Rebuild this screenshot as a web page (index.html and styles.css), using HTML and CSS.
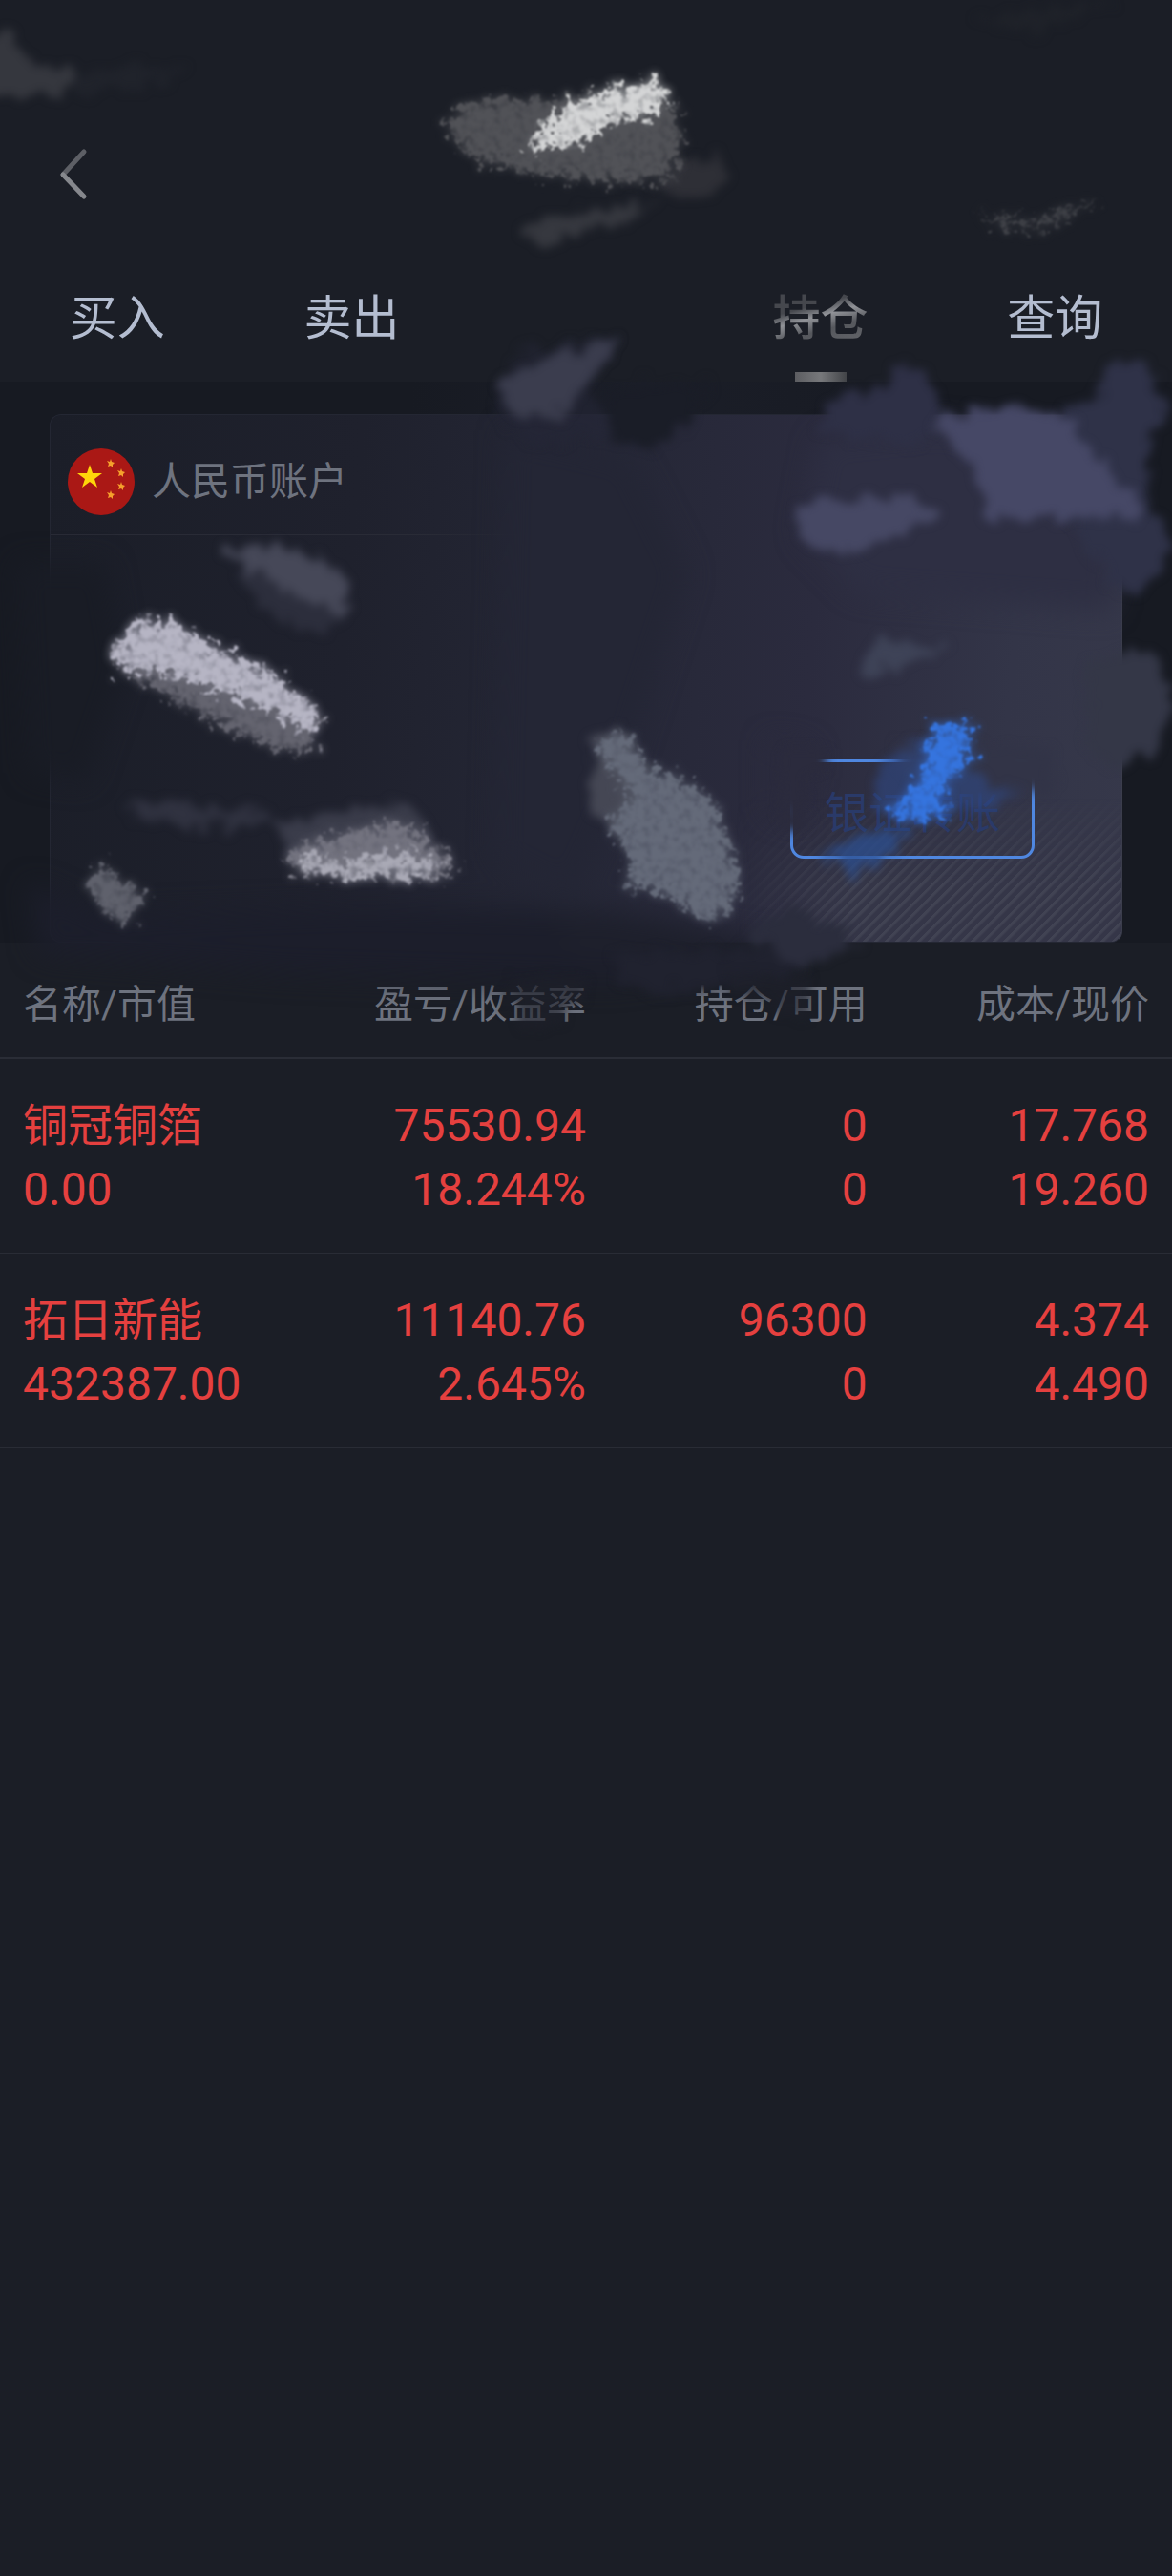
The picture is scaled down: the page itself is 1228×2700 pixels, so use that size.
FILE: index.html
```html
<!DOCTYPE html>
<html lang="zh-CN">
<head>
    <meta charset="UTF-8">
    <meta name="viewport" content="width=device-width, initial-scale=1.0">
    <title>持仓</title>
    <link rel="stylesheet" href="styles.css">
</head>
<body>
    <header class="header">
        <button type="button" class="back-btn" aria-label="返回">
            <svg width="36" height="60" viewBox="0 0 36 60" fill="none" stroke-width="5" stroke-linecap="round">
                <path d="M28 6 L6 30" stroke="#5d5f65"/>
                <path d="M6 30 L28 53" stroke="#86888d"/>
            </svg>
        </button>
        <nav class="tabs">
            <a href="#buy" class="tab">买入</a>
            <a href="#sell" class="tab">卖出</a>
            <span class="tab"></span>
            <a href="#position" class="tab active"><span class="tab-text">持仓</span></a>
            <a href="#query" class="tab">查询</a>
        </nav>
    </header>

    <main>
        <section class="account">
            <div class="card">
                <div class="card-head">
                    <svg class="flag" width="70" height="70" viewBox="0 0 70 70">
                        <circle cx="35" cy="35" r="35" fill="#aa1815"/>
                        <polygon points="23,17 26,26 36,26 28,32 31,41 23,35 15,41 18,32 10,26 20,26" fill="#ffd60a"/>
                        <g fill="#f5a02c">
                            <path d="M45 11 L46 14 L49 15 L47 17 L47 20 L45 18 L42 19 L43 16 L41 13 L44 14 Z"/>
                            <path d="M56 21 L57 24 L60 25 L58 27 L58 30 L56 28 L53 29 L54 26 L52 23 L55 24 Z"/>
                            <path d="M56 35 L57 38 L60 39 L58 41 L58 44 L56 42 L53 43 L54 40 L52 37 L55 38 Z"/>
                            <path d="M45 44 L46 47 L49 48 L47 50 L47 53 L45 51 L42 52 L43 49 L41 46 L44 47 Z"/>
                        </g>
                    </svg>
                    <span class="card-title">人民币账户</span>
                </div>
                <div class="card-body">
                    <button type="button" class="transfer-btn">银证转账</button>
                </div>
            </div>
        </section>

        <table class="positions">
            <thead>
                <tr>
                    <th>名称/市值</th>
                    <th>盈亏/收益率</th>
                    <th>持仓/可用</th>
                    <th>成本/现价</th>
                </tr>
            </thead>
            <tbody>
                <tr>
                    <td><span class="name">铜冠铜箔</span><br>0.00</td>
                    <td>75530.94<br>18.244%</td>
                    <td>0<br>0</td>
                    <td>17.768<br>19.260</td>
                </tr>
                <tr>
                    <td><span class="name">拓日新能</span><br>432387.00</td>
                    <td>11140.76<br>2.645%</td>
                    <td>96300<br>0</td>
                    <td>4.374<br>4.490</td>
                </tr>
            </tbody>
        </table>
    </main>

    <!-- brush strokes over the private parts -->
    <svg class="strokes" viewBox="0 0 1228 1120" aria-hidden="true">
        <defs>
            <filter id="rough" x="-20%" y="-20%" width="140%" height="140%" color-interpolation-filters="sRGB">
                <feTurbulence type="fractalNoise" baseFrequency="0.12" numOctaves="4" seed="4" result="n"/>
                <feDisplacementMap in="SourceGraphic" in2="n" scale="44" xChannelSelector="R" yChannelSelector="G" result="d"/>
                <feColorMatrix in="n" type="matrix" values="0 0 0 0 0  0 0 0 0 0  0 0 0 0 0  0 0 3 0 -0.6" result="a"/>
                <feComposite in="d" in2="a" operator="in" result="g"/>
                <feGaussianBlur in="d" stdDeviation="5" result="b"/>
                <feComponentTransfer in="b" result="haze"><feFuncA type="linear" slope="0.8"/></feComponentTransfer>
                <feMerge result="m"><feMergeNode in="haze"/><feMergeNode in="g"/></feMerge>
                <feGaussianBlur in="m" stdDeviation="1"/>
            </filter>
            <filter id="wash" x="-30%" y="-30%" width="160%" height="160%" color-interpolation-filters="sRGB">
                <feTurbulence type="fractalNoise" baseFrequency="0.06" numOctaves="4" seed="9" result="n"/>
                <feDisplacementMap in="SourceGraphic" in2="n" scale="30" xChannelSelector="R" yChannelSelector="G" result="d"/>
                <feGaussianBlur in="d" stdDeviation="5"/>
            </filter>
            <filter id="soft" x="-40%" y="-40%" width="180%" height="180%" color-interpolation-filters="sRGB">
                <feGaussianBlur stdDeviation="14"/>
            </filter>
        </defs>

        <!-- dark smudges round the card -->
        <g filter="url(#soft)">
            <path fill="#191c25" d="M18 590 L110 590 L130 700 L90 820 L30 810 Z"/>
            <path fill="#1c1e2b" d="M30 925 L110 960 L380 950 L640 955 L800 985 L800 1010 L640 1030 L300 1020 L40 1000 Z"/>
            <path fill="#242635" d="M530 450 L660 480 L720 600 L640 850 L600 940 L520 900 Z"/>
            <path fill="#1e202c" d="M580 960 L680 960 L820 990 L830 1020 L700 1020 L600 1000 Z"/>
            <path fill="#2e2f43" d="M860 460 L1000 445 L1170 560 L1165 640 L900 620 L840 560 Z"/>
            <path fill="#2b2b3d" d="M806 775 L850 785 L850 815 L838 820 L838 862 L806 850 Z"/>
        </g>
        <g filter="url(#wash)">
            <path fill="#1a1d27" d="M632 405 L740 405 L712 452 L680 470 L645 460 Z"/>
            <path fill="#242637" d="M520 432 L540 370 L600 360 L650 350 L620 400 L640 450 L560 470 Z" opacity="0.6"/>
            <path fill="#20222f" d="M645 1000 L850 995 L825 1025 L700 1040 L650 1030 Z"/>
            <path fill="#2b2d3d" d="M780 975 L830 950 L900 985 L870 1000 L845 1014 L820 1005 Z"/>
            <path fill="#2e3046" d="M850 450 L880 415 L930 405 L945 378 L978 395 L988 440 L960 470 Z"/>
            <path fill="#2f3248" d="M1085 460 L1110 432 L1150 415 L1165 378 L1203 378 L1220 425 L1200 480 L1205 530 L1228 560 L1218 600 L1178 625 L1130 560 Z"/>
            <path fill="#343747" d="M1140 690 L1190 680 L1216 695 L1226 740 L1208 790 L1170 806 L1140 790 Z"/>
            <path fill="#2b2b3d" d="M818 785 L866 785 L866 805 L842 812 L842 872 L818 866 Z"/>
            <path fill="#323447" d="M938 782 L1100 782 L1102 828 L1020 834 L950 815 Z"/>
        </g>

        <!-- status bar and title -->
        <g filter="url(#wash)">
            <path fill="#35373e" d="M-30 40 L12 35 L30 65 L85 78 L75 98 L-30 103 Z"/>
            <path fill="#20232b" d="M70 75 L200 68 L150 92 L80 98 Z"/>
            <path fill="#36383f" d="M540 240 L600 222 L690 212 L650 235 L590 250 L560 258 Z"/>
            <path fill="#2e2f36" d="M700 180 L750 162 L765 184 L745 203 L690 208 Z"/>
            <path fill="#1f2229" d="M1020 20 L1130 5 L1170 0 L1080 35 Z"/>
        </g>
        <g filter="url(#rough)">
            <path fill="#515257" d="M466 128 L488 106 L590 104 L645 95 L685 86 L708 115 L714 150 L702 188 L640 190 L560 182 L490 162 Z"/>
            <path fill="#d4d5d6" d="M554 160 L572 127 L600 108 L640 96 L682 84 L702 106 L684 122 L640 130 L610 148 L578 154 Z"/>
            <path fill="#3f4147" d="M1025 222 L1055 230 L1090 230 L1155 207 L1105 236 L1055 240 Z"/>
        </g>

        <!-- account name -->
        <g filter="url(#wash)">
            <path fill="#3b3d4e" d="M523 400 L575 375 L648 352 L620 395 L605 420 L580 440 L540 436 Z"/>
            <path fill="#464866" d="M975 445 L1015 432 L1075 424 L1120 440 L1150 485 L1190 515 L1194 542 L1035 544 L1020 490 Z"/>
            <path fill="#464864" d="M834 535 L851 522 L955 522 L985 538 L930 564 L885 580 L844 572 Z"/>
            <path fill="#3e4357" d="M898 696 L915 672 L995 680 L945 696 L915 706 Z"/>
        </g>

        <!-- balances -->
        <g filter="url(#wash)">
            <path fill="#2c2e3c" d="M245 588 L350 630 L360 655 L310 662 L265 625 Z"/>
            <path fill="#464858" d="M228 579 L300 571 L342 588 L364 612 L364 648 L330 634 L280 606 Z"/>
            <path fill="#303240" d="M130 846 L180 836 L210 850 L280 848 L285 864 L200 866 L150 858 Z"/>
            <path fill="#3a3c4a" d="M290 860 L380 848 L430 840 L460 890 L300 900 Z"/>
            <path fill="#454754" d="M620 778 L650 765 L680 805 L660 890 L620 845 Z"/>
        </g>
        <g filter="url(#rough)">
            <path fill="#64646f" d="M116 693 L180 700 L240 716 L300 736 L338 752 L328 784 L300 786 L250 768 L190 736 Z"/>
            <path fill="#b6b5c4" d="M116 688 L146 648 L185 656 L250 690 L300 716 L334 748 L330 774 L290 748 L230 726 L180 708 L128 702 Z"/>
            <path fill="#73737f" d="M298 895 L335 882 L400 864 L430 868 L476 905 L464 918 L345 920 L308 910 Z"/>
            <path fill="#a9a9b5" d="M306 903 L335 894 L350 908 L375 898 L425 893 L466 907 L444 919 L350 920 Z"/>
            <path fill="#5f616c" d="M90 922 L110 906 L130 926 L150 940 L140 958 L115 966 L100 940 Z"/>
            <path fill="#646a79" d="M622 778 L650 768 L682 806 L712 816 L748 840 L758 870 L776 920 L766 950 L750 966 L715 950 L690 932 L660 934 L658 890 L636 862 L664 835 Z"/>
        </g>

        <!-- transfer button -->
        <g filter="url(#wash)">
            <path fill="#2f4a8a" opacity="0.55" d="M916 805 L960 778 L1000 804 L1070 830 L1035 846 L960 858 L920 856 Z"/>
            <path fill="#2c4f90" opacity="0.75" d="M864 896 L900 876 L955 870 L930 895 L898 916 Z"/>
        </g>
        <g filter="url(#rough)">
            <path fill="#3574de" d="M970 776 L990 758 L1012 762 L1020 780 L1006 804 L990 820 L984 840 L992 856 L960 860 L932 854 L958 826 L974 800 Z"/>
        </g>

        <!-- column titles -->
        <g filter="url(#wash)" opacity="0.6">
            <path fill="#1e202a" d="M534 1025 L618 1022 L612 1050 L580 1075 L538 1078 Z"/>
            <path fill="#1e202a" d="M762 1020 L850 1020 L848 1066 L815 1062 L800 1045 L764 1045 Z"/>
        </g>
    </svg>
</body>
</html>
```

FILE: styles.css
```css
* {
    box-sizing: border-box;
}
body {
    margin: 0;
    min-height: 100vh;
    position: relative;
    background-color: #1b1e26;
    color: #6e737f;
    font-family: Roboto, "Noto Sans CJK SC", sans-serif;
}
button {
    font-family: inherit;
    cursor: pointer;
}
.header {
    padding-top: 153px;
}
.back-btn {
    display: block;
    margin-left: 60px;
    padding: 0;
    border: none;
    background: none;
    line-height: 0;
}
.tabs {
    display: grid;
    grid-template-columns: repeat(5, 1fr);
    margin-top: 55px;
}
.tab {
    display: flex;
    flex-direction: column;
    align-items: center;
    height: 132px;
    color: #b4bdd0;
    font-size: 50px;
    line-height: 132px;
    text-decoration: none;
}
.tab.active::after {
    content: "";
    width: 54px;
    height: 10px;
    margin-top: -10px;
    flex-shrink: 0;
    background: linear-gradient(90deg, #5c5d61, #77787b 50%, #424448);
}
.tab-text {
    font-weight: 500;
    color: transparent;
    background: linear-gradient(165deg, #45474d 40%, #909297 48%, #55575c 58%, #606267 70%);
    -webkit-background-clip: text;
    background-clip: text;
}
.account {
    padding: 34px 52px 0;
    background-color: #171a22;
    background-image: linear-gradient(90deg, transparent 35%, #1b1e28 55%, transparent 80%);
}
.card {
    border-radius: 12px;
    border: 1px solid #242733;
    border-right-color: #3b3d4c;
    background: linear-gradient(95deg, #1b1e28 0%, #1f212d 28%, #252736 50%, #2b2b3e 70%, #333548 88%, #36384a 100%);
    position: relative;
    overflow: hidden;
}
/* diagonal hatching in the lower right corner */
.card::after {
    content: "";
    position: absolute;
    right: 0;
    bottom: 0;
    width: 36%;
    height: 150px;
    background: repeating-linear-gradient(135deg, #414353 0 2px, #353648 4px 8px);
    -webkit-mask-image: linear-gradient(to top, #000 40%, transparent), linear-gradient(to left, #000 70%, transparent);
    -webkit-mask-composite: source-in;
    mask-image: linear-gradient(to top, #000 40%, transparent), linear-gradient(to left, #000 70%, transparent);
    mask-composite: intersect;
}
.card-head {
    display: flex;
    align-items: center;
    gap: 18px;
    height: 126px;
    padding: 14px 18px 0;
    border-bottom: 1px solid transparent;
    border-image: linear-gradient(90deg, #292b36 35%, transparent 45%) 1;
}
.flag {
    flex-shrink: 0;
}
.card-title {
    font-size: 41px;
    line-height: 60px;
}
.card-body {
    display: flex;
    justify-content: flex-end;
    padding: 235px 91px 87px;
}
.transfer-btn {
    width: 256px;
    height: 104px;
    padding: 0;
    border: 3px solid #4f87e0;
    border-radius: 14px;
    background: none;
    color: #2a3a69;
    font-size: 46px;
    position: relative;
    z-index: 1;
}
.positions {
    width: 100%;
    table-layout: fixed;
    border-collapse: separate;
    border-spacing: 0;
}
.positions th {
    width: 24%;
    padding: 37px 0 27px;
    border-bottom: 2px solid #2a2d36;
    font-size: 41px;
    font-weight: 400;
    line-height: 56px;
    text-align: right;
}
.positions td {
    padding: 36px 0 33px;
    border-bottom: 1px solid #292c35;
    color: #e5403f;
    font-size: 48px;
    line-height: 67px;
    text-align: right;
}
.positions th:first-child,
.positions td:first-child {
    width: 26%;
    padding-left: 24px;
    text-align: left;
}
.positions th:last-child,
.positions td:last-child {
    width: 26%;
    padding-right: 24px;
}
.positions td .name {
    display: inline-block;
    font-size: 47px;
    line-height: 67px;
    vertical-align: top;
}
.strokes {
    position: absolute;
    top: 0;
    left: 0;
    width: 100%;
    height: auto;
    z-index: 2;
    pointer-events: none;
}
```
